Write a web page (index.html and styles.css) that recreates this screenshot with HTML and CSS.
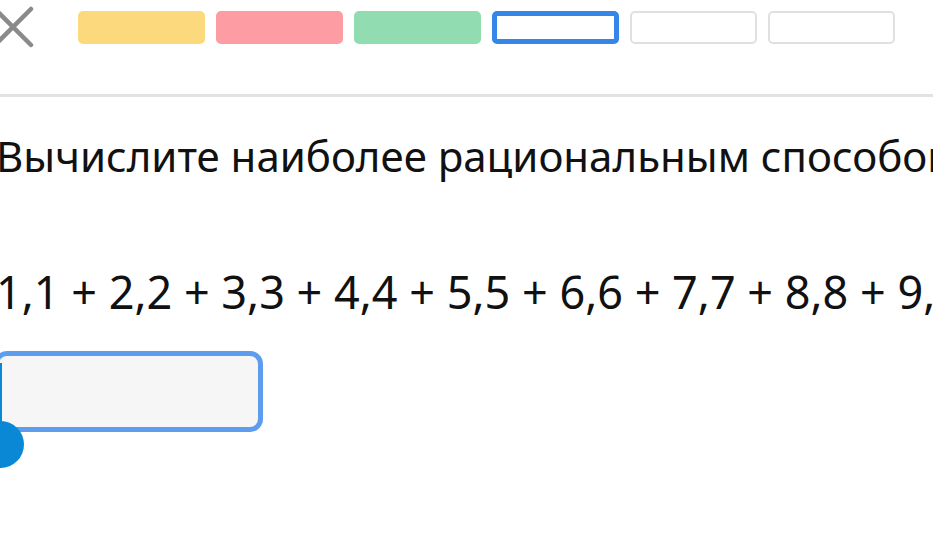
FILE: index.html
```html
<!DOCTYPE html>
<html lang="ru">
<head>
    <meta charset="UTF-8">
    <meta name="viewport" content="width=device-width, initial-scale=1.0">
    <title>Задание</title>
    <link rel="stylesheet" href="styles.css">
</head>
<body>

    <div class="top-bar">
        <div class="close">
            <svg width="42" height="42" viewBox="0 0 42 42">
                <path d="M3 3 L39 39 M39 3 L3 39" stroke="#8a8a8a" stroke-width="4.5" stroke-linecap="round" fill="none"/>
            </svg>
        </div>
        <div class="steps">
            <div class="step yellow"></div>
            <div class="step red"></div>
            <div class="step green"></div>
            <div class="step current"></div>
            <div class="step"></div>
            <div class="step"></div>
        </div>
    </div>

    <div class="task">
        <div class="question">Вычислите наиболее рациональным способом</div>
        <div class="expression">1,1 + 2,2 + 3,3 + 4,4 + 5,5 + 6,6 + 7,7 + 8,8 + 9,9</div>

        <!-- answer field with text cursor -->
        <div class="answer">
            <div class="field"></div>
            <div class="caret"></div>
            <div class="caret-handle"></div>
        </div>
    </div>

</body>
</html>
```

FILE: styles.css
```css
body {
    margin: 0;
    background: #fff;
    font-family: "Noto Sans", "Open Sans", sans-serif;
    color: #111;
    overflow: hidden;
    width: 933px;
    height: 552px;
}

.top-bar {
    display: flex;
    align-items: center;
    padding: 6px 0 46px;
    border-bottom: 3px solid #e2e2e2;
}

.close {
    margin-left: -8px;
    height: 42px;
}

.steps {
    display: flex;
    gap: 11px;
    margin-left: 44px;
}

.step {
    width: 127px;
    height: 33px;
    box-sizing: border-box;
    border-radius: 5px;
    border: 2px solid #e0e0e0;
}

.step.yellow { background: #fcd97c; border-color: #fcd97c; }
.step.red { background: #fd9ca3; border-color: #fd9ca3; }
.step.green { background: #91dcb1; border-color: #91dcb1; }
.step.current { border: 5px solid #3586e6; }

.task {
    margin-left: -4px;
    white-space: nowrap;
}

.question {
    font-size: 42px;
    line-height: 52px;
    margin-top: 33px;
}

.expression {
    font-size: 45px;
    line-height: 52px;
    margin-top: 84px;
}

.answer {
    position: relative;
    margin-top: 33px;
    margin-left: -2px;
    width: 269px;
}

.field {
    height: 81px;
    box-sizing: border-box;
    border: 5px solid #5e9ced;
    border-radius: 13px;
    background: #f6f6f6;
}

.caret {
    position: absolute;
    left: 5px;
    top: 12px;
    width: 3px;
    height: 62px;
    background: #0a88d6;
}

.caret-handle {
    position: absolute;
    left: -17px;
    top: 70px;
    width: 47px;
    height: 47px;
    border-radius: 50%;
    background: #0a88d6;
}
```
